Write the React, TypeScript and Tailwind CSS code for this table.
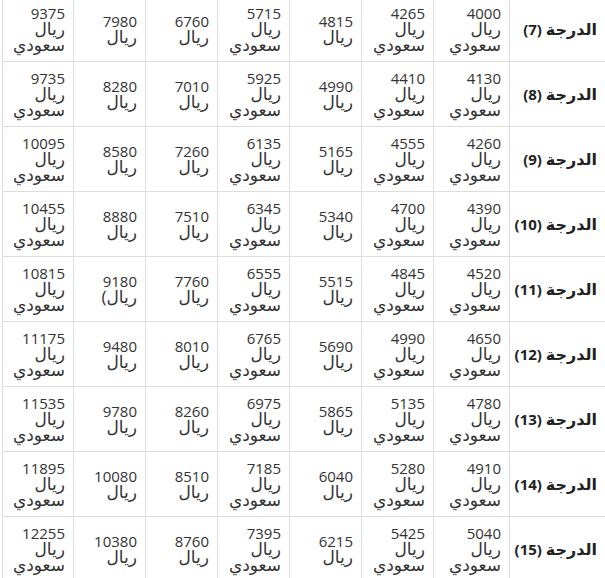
const rows: { grade: number; values: string[] }[] = [
  { grade: 7, values: ["4000", "4265", "4815", "5715", "6760", "7980", "9375"] },
  { grade: 8, values: ["4130", "4410", "4990", "5925", "7010", "8280", "9735"] },
  { grade: 9, values: ["4260", "4555", "5165", "6135", "7260", "8580", "10095"] },
  { grade: 10, values: ["4390", "4700", "5340", "6345", "7510", "8880", "10455"] },
  { grade: 11, values: ["4520", "4845", "5515", "6555", "7760", "9180", "10815"] },
  { grade: 12, values: ["4650", "4990", "5690", "6765", "8010", "9480", "11175"] },
  { grade: 13, values: ["4780", "5135", "5865", "6975", "8260", "9780", "11535"] },
  { grade: 14, values: ["4910", "5280", "6040", "7185", "8510", "10080", "11895"] },
  { grade: 15, values: ["5040", "5425", "6215", "7395", "8760", "10380", "12255"] },
];

// columns that say "ريال سعودي" vs just "ريال"
const saudi = [true, true, false, true, false, false, true];

function Amount({ value, full, paren }: { value: string; full: boolean; paren?: boolean }) {
  return (
    <div className="leading-[16px]">
      <div>{value}</div>
      {paren ? (
        <div dir="ltr" className="text-right text-[17px]">(ريال</div>
      ) : (
        <div className="text-[17px]">ريال</div>
      )}
      {full && <div className="text-[17px]">سعودي</div>}
    </div>
  );
}

export default function App() {
  return (
    <div
      className="w-[605px] h-[578px] overflow-hidden bg-white text-[#333]"
      style={{ fontFamily: '"Open Sans", "DejaVu Sans", sans-serif' }}
    >
      <table dir="rtl" className="-mt-[4px] ml-[2px] w-[603px] table-fixed border-collapse text-[15px]">
        <colgroup>
          <col className="w-[96px]" />
          <col className="w-[76px]" />
          <col className="w-[72px]" />
          <col className="w-[72px]" />
          <col className="w-[72px]" />
          <col className="w-[72px]" />
          <col className="w-[72px]" />
          <col className="w-[71px]" />
        </colgroup>
        <tbody>
          {rows.map((r) => (
            <tr key={r.grade} className="h-[65px]">
              <td className="border border-[#dddddd] px-[8px] align-middle text-right font-bold text-[#222] whitespace-nowrap">
                <span className="text-[16px]">الدرجة</span> ({r.grade})
              </td>
              {r.values.map((v, i) => (
                <td key={i} className="border border-[#dddddd] px-[8px] align-middle text-right">
                  <Amount value={v} full={saudi[i]} paren={r.grade === 11 && i === 5} />
                </td>
              ))}
            </tr>
          ))}
        </tbody>
      </table>
    </div>
  );
}
